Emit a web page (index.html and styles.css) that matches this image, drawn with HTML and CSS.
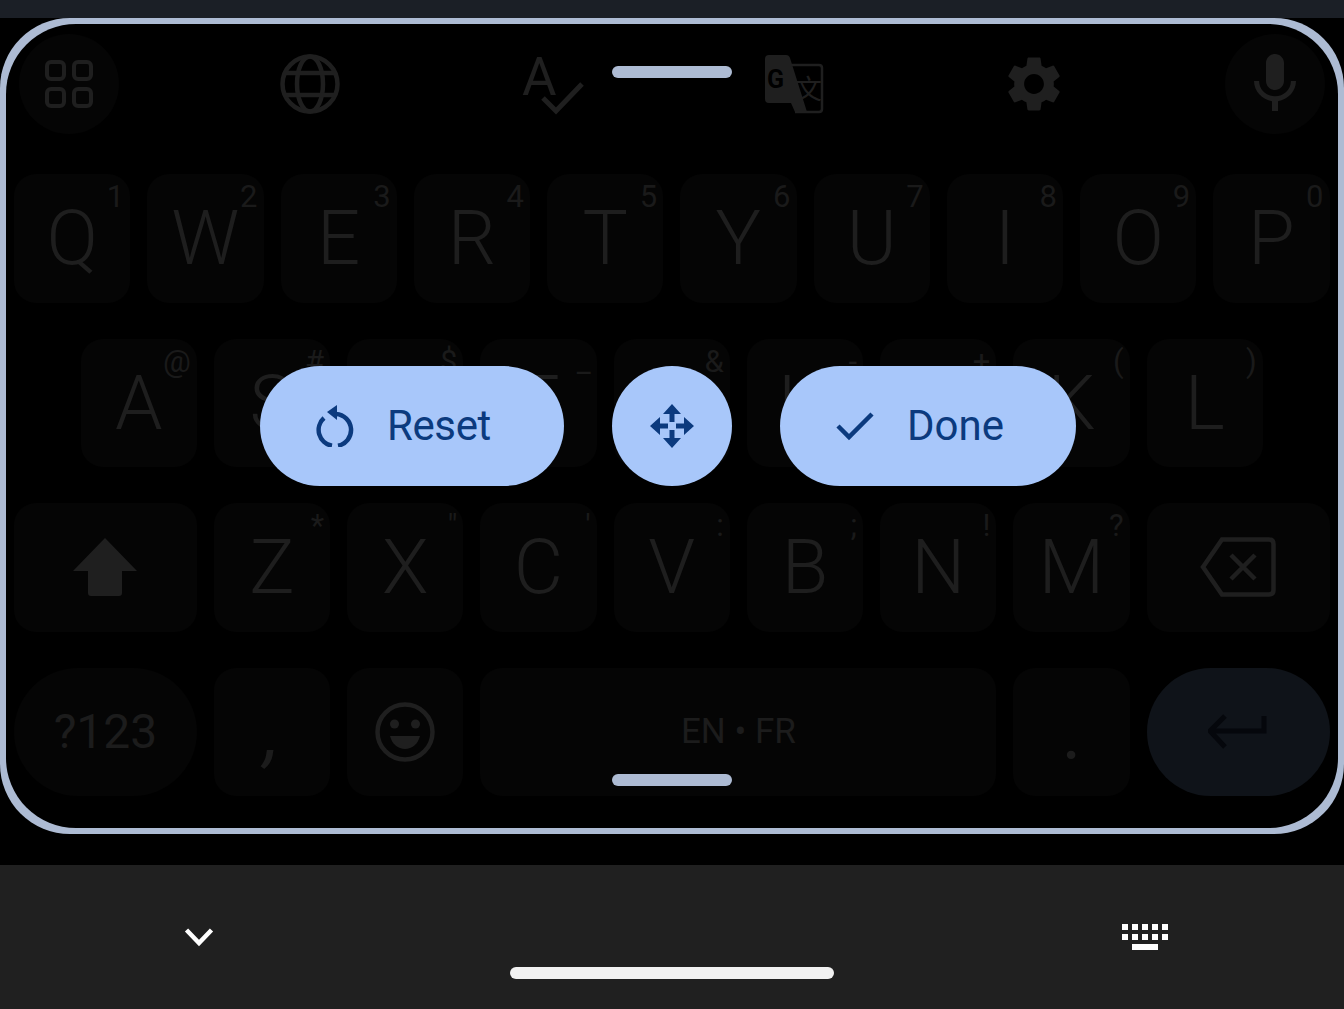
FILE: index.html
```html
<!DOCTYPE html>
<html lang="en">
<head>
  <meta charset="UTF-8" />
  <title>Keyboard resize</title>
  <meta name="viewport" content="width=device-width, initial-scale=1" />
  <link rel="stylesheet" href="styles.css">
</head>
<body>
  <div class="status-strip"></div>

  <div class="board">
    <div class="frame">
      <div class="keyboard">
        <!-- toolbar -->
        <div class="toolbar">
          <div class="tool tool-round">
            <svg width="48" height="48" viewBox="0 0 48 48" fill="none" stroke="#1f1f1f" stroke-width="4">
              <rect x="2" y="2" width="17" height="17" rx="4"/>
              <rect x="29" y="2" width="17" height="17" rx="4"/>
              <rect x="2" y="29" width="17" height="17" rx="4"/>
              <rect x="29" y="29" width="17" height="17" rx="4"/>
            </svg>
          </div>
          <div class="tool">
            <svg width="64" height="64" viewBox="0 0 64 64" fill="none" stroke="#1f1f1f" stroke-width="4.5">
              <circle cx="32" cy="32" r="27.5"/>
              <ellipse cx="32" cy="32" rx="13" ry="27.5"/>
              <path d="M7 21h50M7 43h50"/>
            </svg>
          </div>
          <div class="tool">
            <svg width="72" height="72" viewBox="0 0 72 72" fill="none">
              <text x="7" y="47" class="icon-letter" fill="#1f1f1f">A</text>
              <path d="M28 50l13 13 26-27" stroke="#1f1f1f" stroke-width="5"/>
            </svg>
          </div>
          <div class="tool">
            <svg width="72" height="72" viewBox="0 0 72 72" fill="none">
              <path d="M12 7h17q3 0 4 3l17 54H38l-4-9H12q-4 0-4-4V11q0-4 4-4z" fill="#1f1f1f"/>
              <path d="M33 17H62q3 0 3 3V61q0 3-3 3H38" stroke="#1f1f1f" stroke-width="2.500"/>
              <text x="10" y="40" class="icon-g" fill="#000">G</text>
              <text x="38" y="51" class="icon-cjk" fill="#1f1f1f">文</text>
            </svg>
          </div>
          <div class="tool">
            <svg width="66" height="66" viewBox="0 0 24 24" fill="#1f1f1f">
              <path d="M19.14 12.94c.04-.3.06-.61.06-.94 0-.32-.02-.64-.07-.94l2.03-1.58c.18-.14.23-.41.12-.61l-1.92-3.32c-.12-.22-.37-.29-.59-.22l-2.39.96c-.5-.38-1.03-.7-1.62-.94l-.36-2.54c-.04-.24-.24-.41-.48-.41h-3.84c-.24 0-.43.17-.47.41l-.36 2.54c-.59.24-1.13.57-1.62.94l-2.39-.96c-.22-.08-.47 0-.59.22L2.74 8.87c-.12.21-.08.47.12.61l2.03 1.58c-.05.3-.09.63-.09.94s.02.64.07.94l-2.03 1.58c-.18.14-.23.41-.12.61l1.92 3.32c.12.22.37.29.59.22l2.39-.96c.5.38 1.03.7 1.62.94l.36 2.54c.05.24.24.41.48.41h3.84c.24 0 .44-.17.47-.41l.36-2.54c.59-.24 1.13-.56 1.62-.94l2.39.96c.22.08.47 0 .59-.22l1.92-3.32c.12-.22.07-.47-.12-.61l-2.01-1.58zM12 15.6c-1.98 0-3.6-1.62-3.6-3.6s1.62-3.6 3.6-3.6 3.6 1.62 3.6 3.6-1.62 3.6-3.6 3.6z"/>
            </svg>
          </div>
          <div class="tool tool-round">
            <svg width="72" height="72" viewBox="0 0 24 24" fill="#1f1f1f">
              <path d="M12 14c1.66 0 2.99-1.34 2.99-3L15 5c0-1.66-1.34-3-3-3S9 3.34 9 5v6c0 1.66 1.34 3 3 3zm5.3-3c0 3-2.54 5.1-5.3 5.1S6.7 14 6.7 11H5c0 3.41 2.72 6.23 6 6.72V21h2v-3.28c3.28-.48 6-3.3 6-6.72h-1.7z"/>
            </svg>
          </div>
        </div>

        <!-- keys, 20 half-key columns -->
        <div class="keys">
          <div class="key"><span class="hint">1</span>Q</div>
          <div class="key"><span class="hint">2</span>W</div>
          <div class="key"><span class="hint">3</span>E</div>
          <div class="key"><span class="hint">4</span>R</div>
          <div class="key"><span class="hint">5</span>T</div>
          <div class="key"><span class="hint">6</span>Y</div>
          <div class="key"><span class="hint">7</span>U</div>
          <div class="key"><span class="hint">8</span>I</div>
          <div class="key"><span class="hint">9</span>O</div>
          <div class="key"><span class="hint">0</span>P</div>

          <div class="key key-indent"><span class="hint">@</span>A</div>
          <div class="key"><span class="hint">#</span>S</div>
          <div class="key"><span class="hint">$</span>D</div>
          <div class="key"><span class="hint">_</span>F</div>
          <div class="key"><span class="hint">&amp;</span>G</div>
          <div class="key"><span class="hint">-</span>H</div>
          <div class="key"><span class="hint">+</span>J</div>
          <div class="key"><span class="hint">(</span>K</div>
          <div class="key"><span class="hint">)</span>L</div>

          <div class="key key-wide">
            <svg width="64" height="60" viewBox="0 0 64 60" fill="#1f1f1f"><path d="M32 1L64 34H49V56q0 3-3 3H18q-3 0-3-3V34H0z"/></svg>
          </div>
          <div class="key"><span class="hint">*</span>Z</div>
          <div class="key"><span class="hint">"</span>X</div>
          <div class="key"><span class="hint">'</span>C</div>
          <div class="key"><span class="hint">:</span>V</div>
          <div class="key"><span class="hint">;</span>B</div>
          <div class="key"><span class="hint">!</span>N</div>
          <div class="key"><span class="hint">?</span>M</div>
          <div class="key key-wide">
            <svg width="76" height="60" viewBox="0 0 76 60" fill="none" stroke="#1f1f1f" stroke-width="4.5">
              <path d="M22 2.500H69q4.500 0 4.500 4.500V53q0 4.500-4.500 4.500H22L3 30z"/>
              <path d="M31 18l24 24M55 18L31 42"/>
            </svg>
          </div>

          <div class="key key-wide key-pill key-symbols">?123</div>
          <div class="key key-punct key-comma">,</div>
          <div class="key">
            <svg width="60" height="60" viewBox="0 0 60 60" fill="none">
              <circle cx="30" cy="30" r="27.500" stroke="#1f1f1f" stroke-width="4.500"/>
              <circle cx="19.500" cy="22" r="4.500" fill="#1f1f1f"/>
              <circle cx="40.500" cy="22" r="4.500" fill="#1f1f1f"/>
              <path d="M15 34h30c-2 8-8 13-15 13s-13-5-15-13z" fill="#1f1f1f"/>
            </svg>
          </div>
          <div class="key key-space">EN • FR</div>
          <div class="key key-punct">.</div>
          <div class="key key-wide key-pill key-enter">
            <svg width="60" height="36" viewBox="0 0 60 36" fill="none" stroke="#05070c" stroke-width="5">
              <path d="M56 2V17H4M17 2L2 17l15 16"/>
            </svg>
          </div>
        </div>

        <div class="handle handle-top"></div>
        <div class="handle handle-bottom"></div>

        <div class="actions">
          <div class="action action-reset">
            <svg width="38" height="42" viewBox="0 0 38 42" fill="none" stroke="#0b3a7e" stroke-width="4.500">
              <path d="M8 13a16 16 0 0 0 8 27.700"/>
              <path d="M20 9a16 16 0 0 1 2 31.700"/>
              <path d="M21 0v15l-10-8z" fill="#0b3a7e" stroke="none"/>
            </svg>
            <span>Reset</span>
          </div>
          <div class="action action-move">
            <svg width="44" height="44" viewBox="0 0 44 44" fill="#0b3a7e">
              <path d="M22 0l9 10h-6.500v8h-5v-8H13z"/>
              <path d="M22 0l9 10h-6.500v8h-5v-8H13z" transform="rotate(90 22 22)"/>
              <path d="M22 0l9 10h-6.500v8h-5v-8H13z" transform="rotate(180 22 22)"/>
              <path d="M22 0l9 10h-6.500v8h-5v-8H13z" transform="rotate(270 22 22)"/>
            </svg>
          </div>
          <div class="action action-done">
            <svg width="38" height="30" viewBox="0 0 38 30" fill="none" stroke="#0b3a7e" stroke-width="4.500">
              <path d="M2 15l11 11L36 3"/>
            </svg>
            <span>Done</span>
          </div>
        </div>
      </div>
    </div>
  </div>

  <div class="bottom-nav">
    <div class="nav-row">
      <svg width="48" height="48" viewBox="0 0 48 48" fill="none" stroke="#fff" stroke-width="4.500">
        <path d="M11.500 17L24 30l12.500-13"/>
      </svg>
      <svg width="48" height="48" viewBox="0 0 48 48" fill="#fff">
        <rect x="1" y="11" width="6" height="6"/><rect x="11" y="11" width="6" height="6"/><rect x="21" y="11" width="6" height="6"/><rect x="31" y="11" width="6" height="6"/><rect x="41" y="11" width="6" height="6"/>
        <rect x="1" y="21" width="6" height="6"/><rect x="11" y="21" width="6" height="6"/><rect x="21" y="21" width="6" height="6"/><rect x="31" y="21" width="6" height="6"/><rect x="41" y="21" width="6" height="6"/>
        <rect x="11" y="31" width="26" height="6"/>
      </svg>
    </div>
    <div class="gesture-pill"></div>
  </div>
</body>
</html>
```

FILE: styles.css
```css
html, body {
  margin: 0; padding: 0; height: 100%;
  background: #000;
  font-family: Roboto, 'Liberation Sans', sans-serif;
  overflow: hidden;
}
.status-strip {
  height: 18px;
  background: #1b1f26;
}
.board {
  height: 847px;
  background: #000;
}
.frame {
  height: 816px;
  padding: 6px;
  box-sizing: border-box;
  background: #adbbd3;
  border-radius: 70px;
}
.keyboard {
  position: relative;
  height: 100%;
  padding-top: 10px;
  box-sizing: border-box;
  background: #000;
  border-radius: 70px;
}
.toolbar {
  display: flex;
  justify-content: space-between;
  padding: 0 13px;
  margin-bottom: 40px;
}
.tool {
  width: 100px; height: 100px;
  border-radius: 50%;
  display: flex; align-items: center; justify-content: center;
}
.tool svg { overflow: visible; }
.tool-round { background: #050505; }
.icon-letter { font-family: Roboto, sans-serif; font-size: 53px; font-weight: 400; }
.icon-g { font-family: Roboto, sans-serif; font-size: 25px; font-weight: 700; }
.icon-cjk { font-family: 'Noto Sans CJK SC', sans-serif; font-size: 27px; }

.keys {
  display: grid;
  grid-template-columns: repeat(20, 1fr);
  grid-auto-rows: 128.5px;
  row-gap: 36px;
  margin-left: -0.5px;
}
.key {
  position: relative;
  grid-column: span 2;
  margin: 0 8.5px;
  background: #050505;
  border-radius: 22px;
  color: #1e1e1e;
  font-size: 76px;
  font-weight: 300;
  display: flex; align-items: center; justify-content: center;
}
.key-indent { grid-column: 2 / span 2; }
.key-wide { grid-column: span 3; }
.key-pill { border-radius: 64px; }
.key-symbols { font-size: 48px; font-weight: 400; color: #1c1c1c; }
.key-punct { color: #1c1c1c; font-weight: 400; }
.key-comma { font-style: italic; }
.key-space { grid-column: span 8; font-size: 35px; font-weight: 400; color: #1c1c1c; }
.key-enter { background: #0f1319; }
.hint {
  position: absolute;
  top: 5px; right: 6px;
  font-size: 31px;
  line-height: 36px;
  font-weight: 400;
  color: #1a1a1a;
}

.handle {
  position: absolute;
  left: 606px;
  width: 120px; height: 12px;
  border-radius: 6px;
  background: #adbbd3;
}
.handle-top { top: 42px; }
.handle-bottom { top: 750px; }

.actions {
  position: absolute;
  top: 342px; left: 254px;
  display: flex;
  gap: 48px;
}
.action {
  height: 120px;
  box-sizing: border-box;
  border-radius: 60px;
  background: #a8c7fa;
  color: #0b3a7e;
  font-size: 42px;
  display: flex; align-items: center;
}
.action svg { flex: none; }
.action span { margin: 0 0 2px 33px; }
.action-reset { width: 304px; padding-left: 56px; letter-spacing: -0.4px; }
.action-move { width: 120px; justify-content: center; }
.action-done { width: 296px; padding-left: 56px; }

.bottom-nav {
  height: 144px;
  background: #202020;
}
.nav-row {
  height: 60px;
  padding: 42px 175px 0;
  display: flex;
  justify-content: space-between;
  align-items: center;
}
.gesture-pill {
  width: 324px; height: 12px;
  margin: 0 auto;
  border-radius: 6px;
  background: #f1f1f1;
}
```
